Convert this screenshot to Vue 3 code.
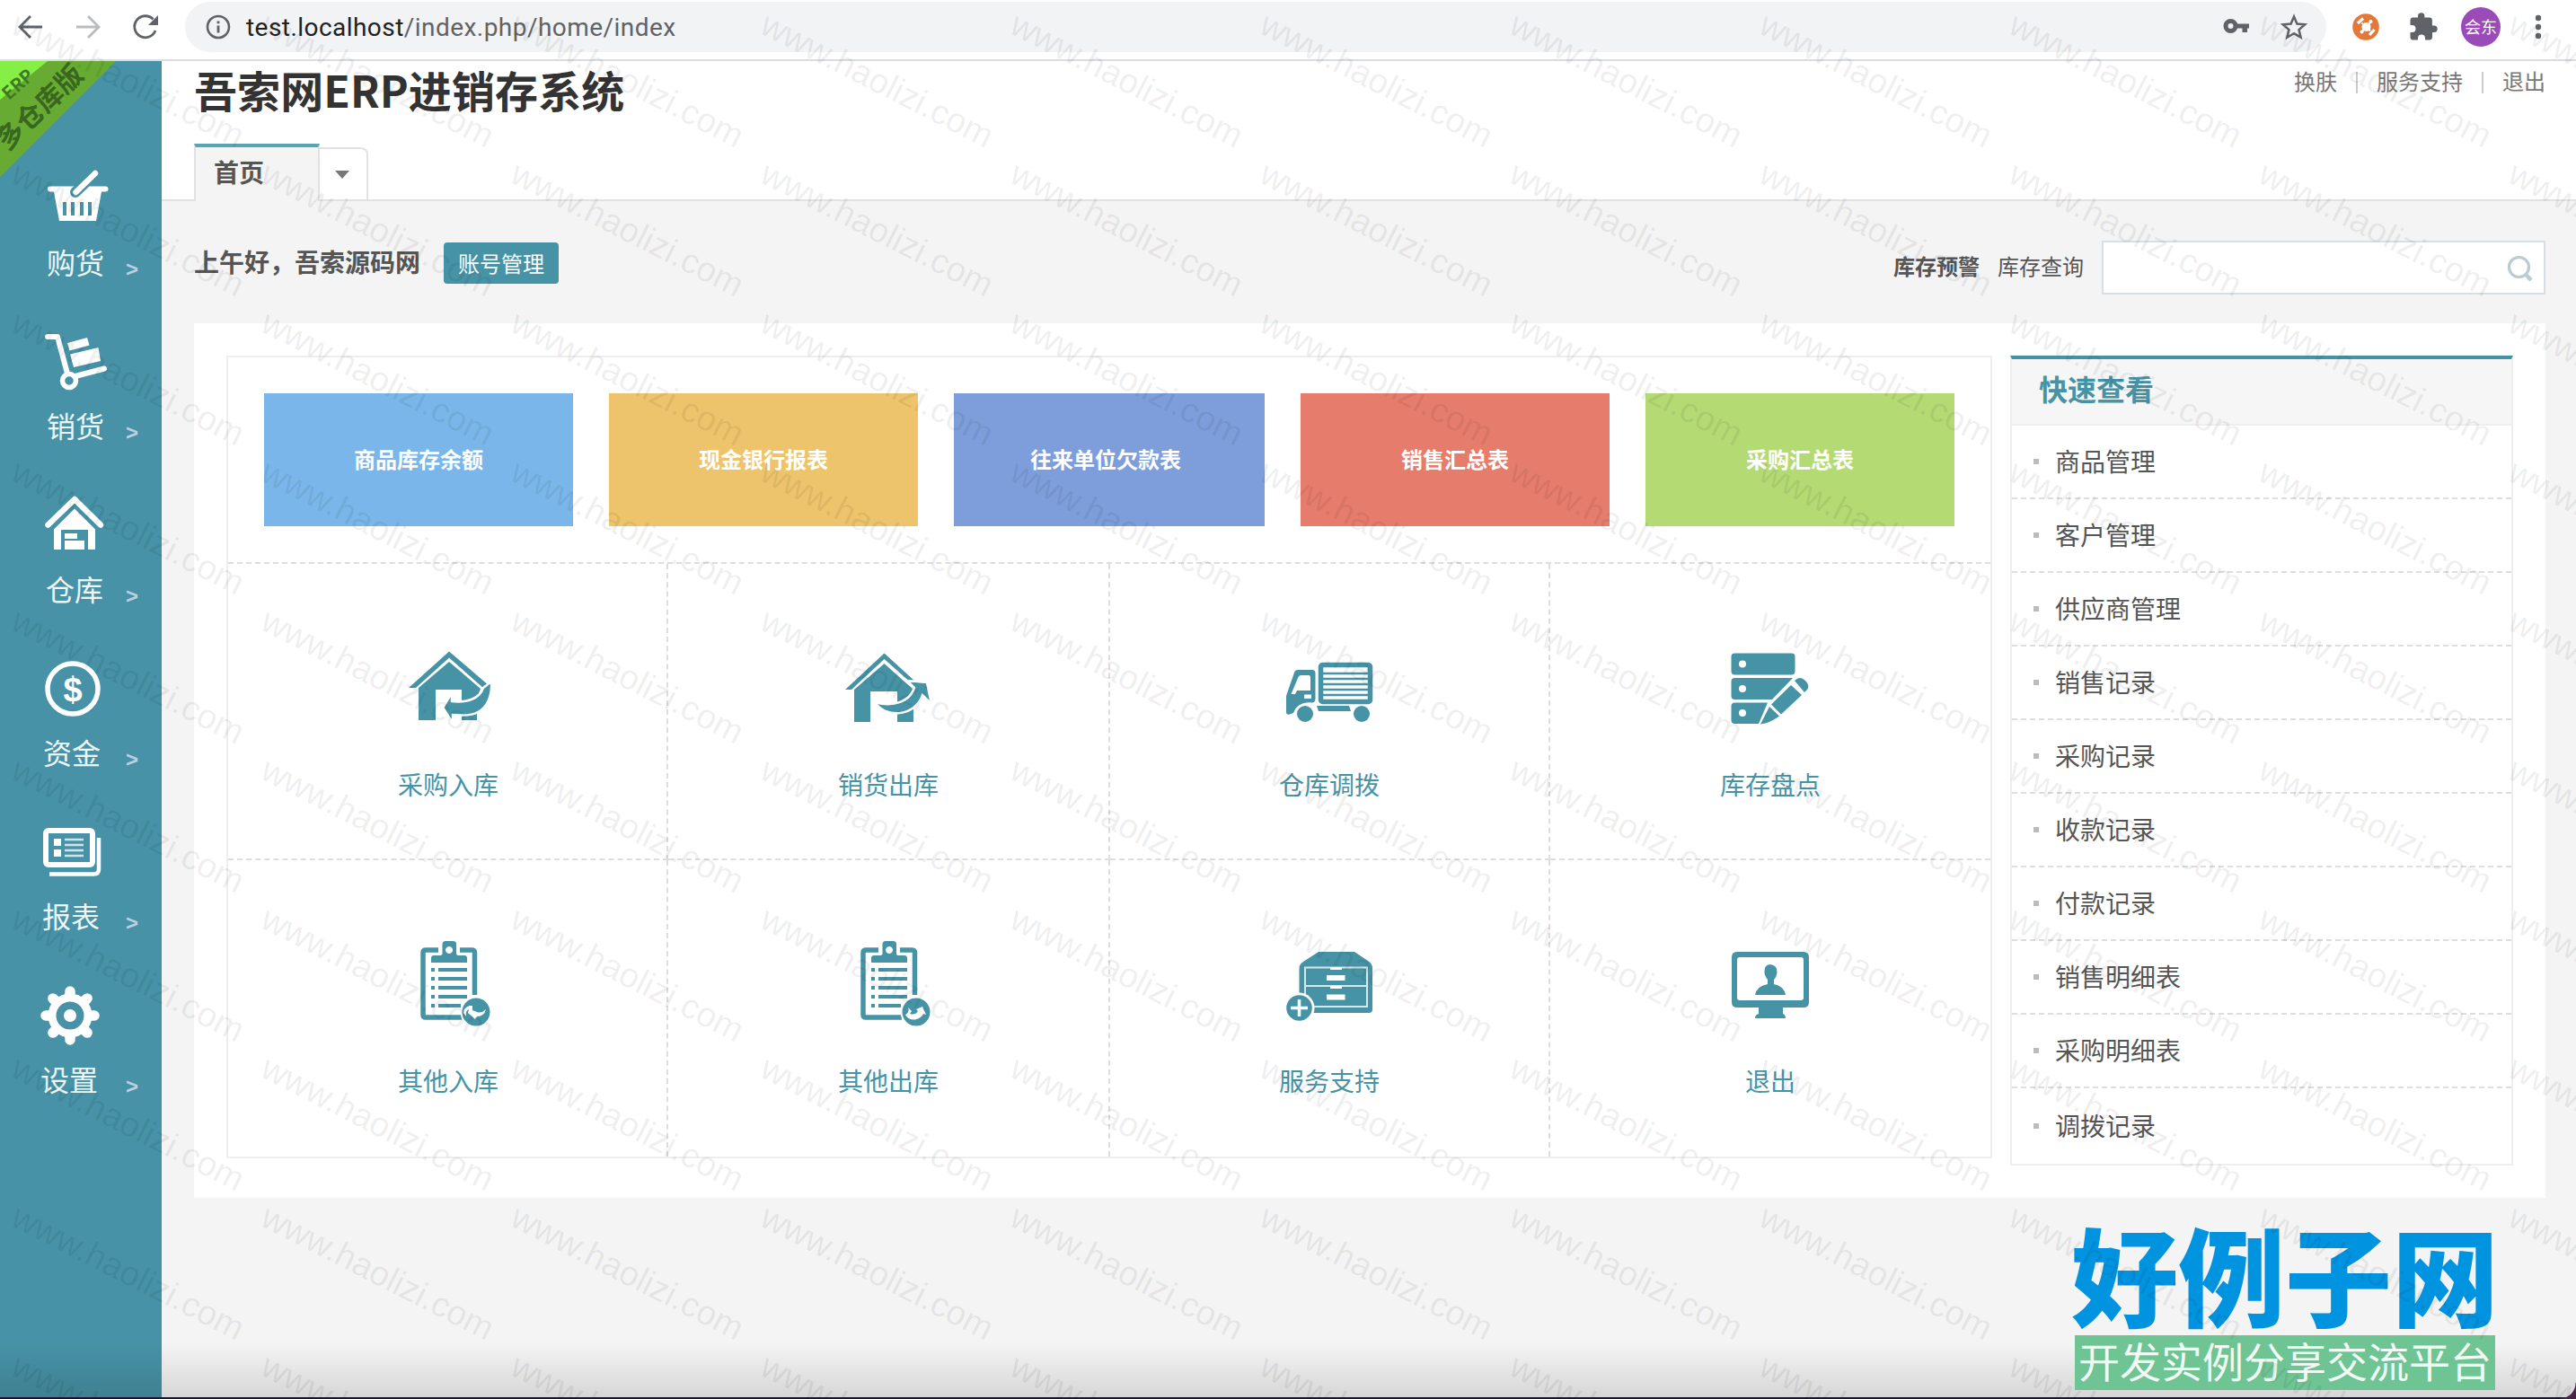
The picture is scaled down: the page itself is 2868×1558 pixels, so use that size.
<script setup>
const menu = [
  { label: '购货', icon: 'basket', indent: 52 },
  { label: '销货', icon: 'cart', indent: 52 },
  { label: '仓库', icon: 'store', indent: 51 },
  { label: '资金', icon: 'money', indent: 48 },
  { label: '报表', icon: 'report', indent: 47 },
  { label: '设置', icon: 'gear', indent: 45 },
]

const reports = [
  { label: '商品库存余额', tone: 'sky' },
  { label: '现金银行报表', tone: 'sand' },
  { label: '往来单位欠款表', tone: 'indigo' },
  { label: '销售汇总表', tone: 'coral' },
  { label: '采购汇总表', tone: 'lime' },
]

const actions = [
  { label: '采购入库', icon: 'in' },
  { label: '销货出库', icon: 'out' },
  { label: '仓库调拨', icon: 'truck' },
  { label: '库存盘点', icon: 'check' },
  { label: '其他入库', icon: 'clipIn' },
  { label: '其他出库', icon: 'clipOut' },
  { label: '服务支持', icon: 'cabinet' },
  { label: '退出', icon: 'monitor' },
]

const links = [
  '商品管理', '客户管理', '供应商管理', '销售记录', '采购记录',
  '收款记录', '付款记录', '销售明细表', '采购明细表', '调拨记录',
]

const teeth = [0, 45, 90, 135, 180, 225, 270, 315]

const marks = []
for (let row = 0; row < 10; row++) {
  for (let col = 0; col < 11; col++) {
    marks.push({ id: row * 11 + col, x: 10 + col * 278, y: 36 + row * 166 })
  }
}
</script>

<template>
  <div class="window">
    <header class="toolbar">
      <svg class="nav" viewBox="0 0 206 60" width="206" height="60">
        <g fill="none" stroke-width="2.8">
          <path d="M47 30H23M34 18L22 30L34 42" stroke="#5f6368" />
          <path d="M85 30H109M98 18L110 30L98 42" stroke="#babcbe" />
          <path d="M173 34A12 12 0 1 1 170.500 21.500" stroke="#5f6368" />
        </g>
        <path d="M176 17V28H165Z" fill="#5f6368" />
      </svg>
      <div class="address">
        <svg viewBox="0 0 28 28" width="28" height="28">
          <circle cx="14" cy="14" r="12" fill="none" stroke="#5f6368" stroke-width="2.600" />
          <path d="M14 12.500V20.500M14 7.500V10.200" stroke="#5f6368" stroke-width="2.800" />
        </svg>
        <p class="url"><b>test.localhost</b>/index.php/home/index</p>
        <svg class="pill-icons" viewBox="0 0 96 32" width="96" height="32">
          <path fill="#5f6368" fill-rule="evenodd" d="M9.500 7a8 8 0 1 1 0 16a8 8 0 0 1 0-16zM9.500 12a3 3 0 1 0 0 6a3 3 0 0 0 0-6z" />
          <path fill="#5f6368" d="M16 12.500H30V17.500H28V22H22.500V17.500H16z" />
          <path fill="none" stroke="#5f6368" stroke-width="2.500" d="M80 4.500L83.400 12.600L92.200 13.300L85.500 19.100L87.600 27.700L80 23.100L72.400 27.700L74.500 19.100L67.800 13.300L76.600 12.600Z" />
        </svg>
      </div>
      <svg class="ext" viewBox="2600 0 268 60" width="268" height="60">
        <circle cx="2634" cy="30" r="14.800" fill="#e57838" />
        <circle cx="2634.500" cy="30" r="5" fill="#fff" />
        <path d="M2629.500 25.500L2639 34.500M2639 25L2630 35" stroke="#fff" stroke-width="2.200" />
        <path d="M2625 26L2631 20.500M2638 39L2643.500 33" stroke="#fff" stroke-width="3.200" />
        <g fill="#fff"><circle cx="2639.500" cy="24" r="2" /><circle cx="2629.500" cy="35.500" r="2" /></g>
        <path fill="#5f6368" d="M2710 28.500h-2.100v-6c0-1.700-1.300-3-3-3h-5.500v-1.500a3.700 3.700 0 0 0-7.400 0v1.500h-5.500c-1.700 0-3 1.300-3 3v5.500h2a4 4 0 0 1 0 8h-2v5.500c0 1.700 1.300 3 3 3h5.500v-2a4 4 0 0 1 8 0v2h5c1.700 0 3-1.300 3-3v-5.600h2a3.700 3.700 0 0 0 0-7.400z" />
        <circle cx="2762" cy="30" r="22" fill="#9b4bb8" />
        <text x="2762" y="36.500" text-anchor="middle" font-size="18" fill="#fff">会东</text>
        <g fill="#5f6368">
          <circle cx="2826" cy="20" r="3.200" /><circle cx="2826" cy="30" r="3.200" /><circle cx="2826" cy="40" r="3.200" />
        </g>
      </svg>
    </header>

    <div class="body">
      <nav class="sidebar">
        <svg class="ribbon" viewBox="0 0 132 132" width="132" height="132">
          <path d="M0 0H129L0 129Z" fill="#68ab33" />
          <path d="M0 0H53L0 43Z" fill="#86ef46" />
          <text transform="translate(20 26) rotate(-42)" y="7" text-anchor="middle" class="rib-s">ERP</text>
          <text transform="translate(44 51) rotate(-44)" y="11" text-anchor="middle" class="rib-l">多仓库版</text>
        </svg>
        <a v-for="m in menu" :key="m.icon" class="item">
          <svg viewBox="0 0 180 90" width="180" height="90" fill="#fff">
            <g v-if="m.icon === 'basket'">
              <path d="M56 27.500H117.500a3 3 0 0 1 0 6H113L107 66H66L60 33.500H56a3 3 0 0 1 0-6z" />
              <path d="M84 34L106 13" stroke="#4792a6" stroke-width="12" stroke-linecap="round" />
              <path d="M84.500 34L106 13" stroke="#fff" stroke-width="6.500" stroke-linecap="round" />
              <path d="M72 45V60M81 45V60M91 45V60M100 45V60" stroke="#4792a6" stroke-width="4" />
            </g>
            <g v-else-if="m.icon === 'cart'">
              <path d="M53 13H64L75 54M80 58L116 48.500" fill="none" stroke="#fff" stroke-width="6" stroke-linecap="round" stroke-linejoin="round" />
              <circle cx="77" cy="62" r="7.500" fill="#4792a6" stroke="#fff" stroke-width="5.500" />
              <path d="M75 20L97 14L99.500 22.500L77.500 28.500ZM78 32.500L109.500 25L112 40L82 47Z" />
            </g>
            <g v-else-if="m.icon === 'store'">
              <path d="M53.500 40.500L83 12L112 40.500" fill="none" stroke="#fff" stroke-width="6.500" stroke-linecap="round" stroke-linejoin="round" />
              <path d="M60 68V45.500L83 22.500L106 45.500V68H98V46H68V68ZM72 50H86V56H72ZM72 58H94V68H72Z" />
            </g>
            <g v-else-if="m.icon === 'money'">
              <circle cx="81" cy="41" r="28" fill="none" stroke="#fff" stroke-width="5.500" />
              <text x="81" y="54.500" text-anchor="middle" class="dollar">$</text>
            </g>
            <g v-else-if="m.icon === 'report'">
              <rect x="51" y="17" width="52" height="38" rx="3" fill="none" stroke="#fff" stroke-width="6" />
              <path d="M110 25V60Q110 65.500 104.500 65.500H55" fill="none" stroke="#fff" stroke-width="4.500" />
              <path d="M60 26h8v8h-8zM60 38h8v8h-8z" />
              <path d="M72 27H93M72 33H93M72 39H93M72 45H93" stroke="#cfe4e9" stroke-width="2.500" />
            </g>
            <g v-else>
              <path v-for="t in teeth" :key="t" d="M78 22V14" :transform="`rotate(${t} 78 41)`" stroke="#fff" stroke-width="11.500" stroke-linecap="round" />
              <circle cx="78" cy="41" r="20" fill="#4792a6" stroke="#fff" stroke-width="9" />
              <circle cx="78" cy="41" r="7" />
            </g>
          </svg>
          <span class="row" :style="{ paddingLeft: m.indent + 'px' }">
            <span>{{ m.label }}</span><i>&gt;</i>
          </span>
        </a>
      </nav>

      <main class="main">
        <div class="head">
          <div class="headline">
            <h1>吾索网ERP进销存系统</h1>
            <div class="user"><a>换肤</a><s></s><a>服务支持</a><s></s><a>退出</a></div>
          </div>
          <div class="tabs">
            <div class="tab">首页</div>
            <div class="more"><svg width="16" height="9" viewBox="0 0 16 9"><path d="M0 0H16L8 9Z" fill="#777" /></svg></div>
          </div>
        </div>

        <div class="greet">
          <strong>上午好，吾索源码网</strong>
          <button>账号管理</button>
          <div class="search">
            <b>库存预警</b>
            <span>库存查询</span>
            <div class="field">
              <svg width="30" height="32" viewBox="0 0 30 32" fill="none" stroke="#bccbd3">
                <circle cx="14.500" cy="15.500" r="11" stroke-width="3.200" />
                <path d="M22 23.500L28 30" stroke-width="4.500" />
              </svg>
            </div>
          </div>
        </div>

        <section class="panel">
          <div class="board">
            <div class="reports">
              <a v-for="r in reports" :key="r.tone" :class="r.tone">{{ r.label }}</a>
            </div>
            <div class="grid">
              <a v-for="a in actions" :key="a.icon" class="cell">
                <svg viewBox="0 0 110 110" width="110" height="110" fill="#4693a6">
                  <g v-if="a.icon === 'in'">
                    <path d="M12 48L57 7.500L102 46L96 49L57 14.500L20 48Z" />
                    <path d="M23 84V48L57 19L92 49L88 60V84H71V50H42V84Z" />
                    <path d="M104 41C105 58 99 70 89 75Q81 80 61 78V87L50 70L60 54V63C77 65 91 60 95 48Z" stroke="#fff" stroke-width="2.500" />
                  </g>
                  <g v-else-if="a.icon === 'out'">
                    <path d="M8 50L51.500 9.500L86 41L82 43L51.500 16L15 50Z" />
                    <path d="M18 86V50L51.500 21L84 50V86H66V52H36V86Z" />
                    <path d="M41 64C52 82 86 81 94 56L104 66L99 42L77 40L85 48C80 63 62 70 41 64Z" stroke="#fff" stroke-width="2.500" />
                  </g>
                  <g v-else-if="a.icon === 'truck'">
                    <rect x="45.500" y="22.500" width="55" height="41" rx="2" fill="#fff" stroke="#4693a6" stroke-width="5.500" />
                    <path d="M48 32H98M48 38H98M48 44H98M48 50H98M48 56H98" stroke="#4693a6" stroke-width="2.400" />
                    <path fill-rule="evenodd" d="M7 57L16 31Q17 28 20 28H36Q39.500 28 39.500 32V60Q39.500 64 36 64.500Q20 63 15 76Q7 80 7 75ZM12.500 55H17L19 51H34V36Q34 34 32 34H24Q21 34 20 37ZM27 55.500V60H35V55.500Z" />
                    <path d="M41 68H77L79 74H43Z" />
                    <circle cx="28" cy="77" r="9" /><circle cx="91" cy="77" r="9" />
                  </g>
                  <g v-else-if="a.icon === 'check'">
                    <rect x="11.500" y="9.500" width="71" height="24" rx="4" />
                    <path d="M15.500 37H80L57 61H15.500Q11.500 61 11.500 57V41Q11.500 37 15.500 37ZM15.500 64.500H52L42 88H15.500Q11.500 88 11.500 84V68.500Q11.500 64.500 15.500 64.500Z" />
                    <path d="M78 45L90 56L67 77.500L56 66.500ZM54 69L65 79.500Q55 87 44 88.500ZM82 40Q88 34 94 40Q101 47 93 53Z" />
                    <g fill="#fff"><circle cx="24" cy="21.500" r="4" /><circle cx="24" cy="49" r="4" /><circle cx="24" cy="76" r="4" /></g>
                  </g>
                  <g v-else-if="a.icon === 'clipIn' || a.icon === 'clipOut'">
                    <path d="M45 10H31Q28 10 28 13V82Q28 85 31 85H71M69 10H82Q85.500 10 85.500 13V60" fill="none" stroke="#4693a6" stroke-width="5.500" />
                    <path fill-rule="evenodd" d="M49.500 3Q50 0 53 0H61Q65 0 65 3V14Q65 16 68 16H74Q77 16 77 19V24H37V19Q37 16 40 16H46Q49.500 16 49.500 14ZM57 6a4 4 0 1 0 .1 0Z" />
                    <path d="M37 32H41M45 32H77M37 42H41M45 42H77M37 52H41M45 52H77M37 62H41M45 62H77M37 72H41M45 72H70" stroke="#4693a6" stroke-width="4" />
                    <circle cx="87" cy="79" r="17.500" fill="#fff" />
                    <circle cx="87" cy="79" r="15.500" />
                    <path v-if="a.icon === 'clipIn'" d="M73 80Q73 74 80 72L83 72L83 77L88 79Q93 81 98 76Q96 84 88 84L86 87L78 80L79 76Q75 77 76 84Z" fill="#fff" />
                    <path v-else d="M75 82C79 90 91 89 95 81L98 82L94 73L87 76L89 78Q86 83 80 81L82 78L78 74Q80 79 75 82Z" fill="#fff" />
                  </g>
                  <g v-else-if="a.icon === 'cabinet'">
                    <path d="M43 12H83L98 22Q103 25 103 30V76Q103 80 99 80H26Q21.500 80 21.500 76V30Q21.500 26 26 23Z" />
                    <path d="M28 29.500H97V73H28ZM28 50H97" fill="none" stroke="#d5e8ec" stroke-width="2" />
                    <path d="M52 38H72.500V44H52ZM52 59.500H72.500V65.500H52ZM56 29H69V32H56ZM56 50H69V53H56Z" fill="#fff" />
                    <circle cx="21.500" cy="74.500" r="17" fill="#fff" />
                    <circle cx="21.500" cy="74.500" r="14.300" />
                    <path d="M12 74.500H31M21.500 65V84" stroke="#fff" stroke-width="3.500" />
                  </g>
                  <g v-else>
                    <path fill-rule="evenodd" d="M18 12H92Q98 12 98 18V68Q98 74 92 74H18Q12 74 12 68V18Q12 12 18 12ZM21 18Q18 18 18 21V63Q18 66 21 66H89Q92 66 92 63V21Q92 18 89 18Z" />
                    <path d="M42 74H69V81Q72 82 72 86H38Q38 82 42 81ZM55 26Q63 27 62.500 35Q62 40 59 43V48Q70 50 72 60H38Q40 50 52 48V43Q48 38 48.500 33Q49 26 55 26Z" />
                  </g>
                </svg>
                <span>{{ a.label }}</span>
              </a>
            </div>
          </div>

          <aside class="quick">
            <h2>快速查看</h2>
            <ul><li v-for="l in links" :key="l"><span>{{ l }}</span></li></ul>
          </aside>
        </section>
      </main>
    </div>

    <div class="shade"></div>
    <div class="edge"></div>
    <div class="corner"></div>
    <div class="brand">
      <p class="name">好例子网</p>
      <p class="slogan">开发实例分享交流平台</p>
    </div>
    <svg class="marks" width="2868" height="1558" viewBox="0 0 2868 1558">
      <text v-for="k in marks" :key="k.id" :transform="`translate(${k.x} ${k.y}) rotate(27)`">www.haolizi.com</text>
    </svg>
  </div>
</template>

<style>
body { margin: 0; overflow: hidden; }
</style>

<style scoped>
* { box-sizing: border-box; margin: 0; padding: 0; }
.window {
  position: relative;
  width: 2868px;
  height: 1558px;
  overflow: hidden;
  background: #f4f4f4;
  font-family: "Noto Sans CJK SC", "Liberation Sans", sans-serif;
  color: #555;
  display: flex;
  flex-direction: column;
}
svg { display: block; flex: none; }
.toolbar { height: 68px; flex: none; display: flex; background: #fff; border-bottom: 2px solid #dadce4; }
.address {
  width: 2384px; height: 56px; margin-top: 2px; padding: 0 20px 0 23px;
  display: flex; align-items: center; background: #f1f3f4; border-radius: 28px;
}
.url { margin-left: 17px; padding-top: 2px; font: 28px/56px Roboto, "Liberation Sans", sans-serif; letter-spacing: .45px; color: #5f6368; white-space: nowrap; }
.url b { font-weight: 400; color: #202124; }
.pill-icons { margin-left: auto; }
.ext { margin-left: 10px; }

.body { flex: 1; display: flex; min-height: 0; }
.sidebar { position: relative; width: 180px; flex: none; padding-top: 112px; background: #4792a6; }
.ribbon { position: absolute; left: 0; top: 0; }
.rib-s { font-size: 20px; font-weight: 700; fill: #3f7a22; }
.rib-l { font-size: 30px; font-weight: 700; fill: #38681f; }
.item { display: block; height: 182px; }
.row { display: flex; height: 48px; line-height: 43px; font-size: 32px; color: #eef6f8; }
.row i { margin-left: auto; margin-right: 26px; font: 700 24px/59px "Liberation Sans", sans-serif; color: #bdd0e2; }
.dollar { font: 700 38px "Liberation Sans", sans-serif; fill: #fff; }

.main { flex: 1; min-width: 0; display: flex; flex-direction: column; }
.head { height: 156px; flex: none; padding-left: 36px; background: #fff; border-bottom: 2px solid #e2e2e2; display: flex; flex-direction: column; justify-content: space-between; }
.headline { display: flex; justify-content: space-between; align-items: flex-start; }
h1 { font-size: 48px; line-height: 63px; font-weight: 700; color: #333; white-space: nowrap; letter-spacing: .1px; }
.user { display: flex; align-items: center; height: 48px; margin-right: 34px; font-size: 24px; color: #777; }
.user a { line-height: 36px; padding-bottom: 5px; }
.user s { width: 2px; height: 24px; margin: 0 21px; background: #ccc; }
.tabs { display: flex; align-items: flex-end; height: 64px; margin-bottom: -2px; }
.tab { width: 140px; height: 64px; padding-left: 20px; border: 2px solid #e2e2e2; border-top: 4px solid #5aa5b5; border-bottom: 0; background: #f4f4f4; font-size: 28px; line-height: 54px; font-weight: 700; }
.more { width: 54px; height: 60px; padding-right: 3px; border: 2px solid #e2e2e2; border-left: 0; border-radius: 0 8px 0 0; display: flex; align-items: center; justify-content: center; }

.greet { height: 136px; flex: none; padding: 0 34px 0 36px; display: flex; align-items: center; }
.greet strong { padding-bottom: 2px; font-size: 28px; font-weight: 700; color: #555; }
.greet button { width: 128px; height: 46px; margin: 1px 0 0 26px; border: 0; border-radius: 4px; background: #4693a6; color: #fff; font: 24px/46px "Noto Sans CJK SC", sans-serif; }
.search { margin-left: auto; padding-top: 12px; display: flex; align-items: center; font-size: 24px; line-height: 36px; }
.search b, .search span { padding-bottom: 5px; }
.search span { margin: 0 20px; }
.field { width: 494px; height: 60px; padding-right: 12px; border: 2px solid #d7dfe4; background: #fff; display: flex; align-items: center; justify-content: flex-end; }

.panel { width: 2618px; height: 974px; margin-left: 36px; padding: 36px; background: #fff; display: flex; align-items: flex-start; gap: 20px; }
.board { width: 1966px; height: 894px; border: 2px solid #eee; }
.reports { display: flex; gap: 40px; height: 230px; padding: 40px; border-bottom: 2px dashed #ddd; }
.reports a { width: 344px; height: 148px; color: #fff; font-size: 24px; font-weight: 700; line-height: 145px; text-align: center; }
.sky { background: #7ab6e9; }
.sand { background: #edc46b; }
.reports .indigo { width: 346px; padding-right: 8px; background: #7d9ddb; }
.coral { background: #e67c6b; }
.lime { background: #b4da74; }
.grid { display: grid; grid-template-columns: 490px 492px 490px 490px; grid-template-rows: 330px 330px; }
.cell { padding-top: 90px; display: flex; flex-direction: column; align-items: center; border-right: 2px dashed #ddd; border-bottom: 2px dashed #ddd; font-size: 28px; line-height: 40px; color: #4693a6; }
.cell:nth-child(4n) { border-right: 0; }
.cell:nth-child(4n + 1) span { padding-left: 2px; }
.cell:nth-child(4n + 2) svg { margin-right: 2px; }
.cell:nth-child(n + 5) { border-bottom: 0; }
.cell span { margin-top: 25px; }

.quick { width: 560px; height: 902px; border: 2px solid #eee; border-top: 4px solid #4693a6; }
.quick h2 { height: 74px; padding-left: 30px; border-bottom: 2px solid #eee; background: #f6f6f6; color: #4693a6; font-size: 32px; line-height: 64px; }
.quick ul { list-style: none; }
.quick li { height: 82px; padding-left: 24px; border-bottom: 2px dashed #ddd; display: flex; align-items: center; font-size: 28px; line-height: 40px; }
.quick li span { padding-bottom: 3px; }
.quick li:last-child { height: 84px; border-bottom: 0; }
.quick li::before { content: ""; width: 6px; height: 6px; margin-right: 18px; background: #bbb; }

.shade { position: absolute; left: 0; right: 0; bottom: 2px; height: 60px; background: linear-gradient(rgba(0, 0, 0, 0), rgba(0, 0, 0, .12)); }
.edge { position: absolute; left: 0; right: 0; bottom: 0; height: 2px; background: #1b1630; }
.corner { position: absolute; right: 0; bottom: 0; width: 18px; height: 18px; background: radial-gradient(circle at 0 0, transparent 17px, #4a2548 18px); }
.brand { position: absolute; left: 2306px; top: 1358px; width: 472px; }
.name { font-size: 119px; line-height: 119px; height: 129px; font-weight: 900; color: #0093e0; white-space: nowrap; }
.slogan { width: 468px; height: 61px; margin-left: 4px; background: #6fc494; color: #f2faf5; font-size: 46px; line-height: 55px; text-align: center; white-space: nowrap; }
.marks { position: absolute; left: 0; top: 0; pointer-events: none; }
.marks text { font: 38.5px "Liberation Sans", sans-serif; fill: rgba(0, 0, 0, .08); }
</style>
